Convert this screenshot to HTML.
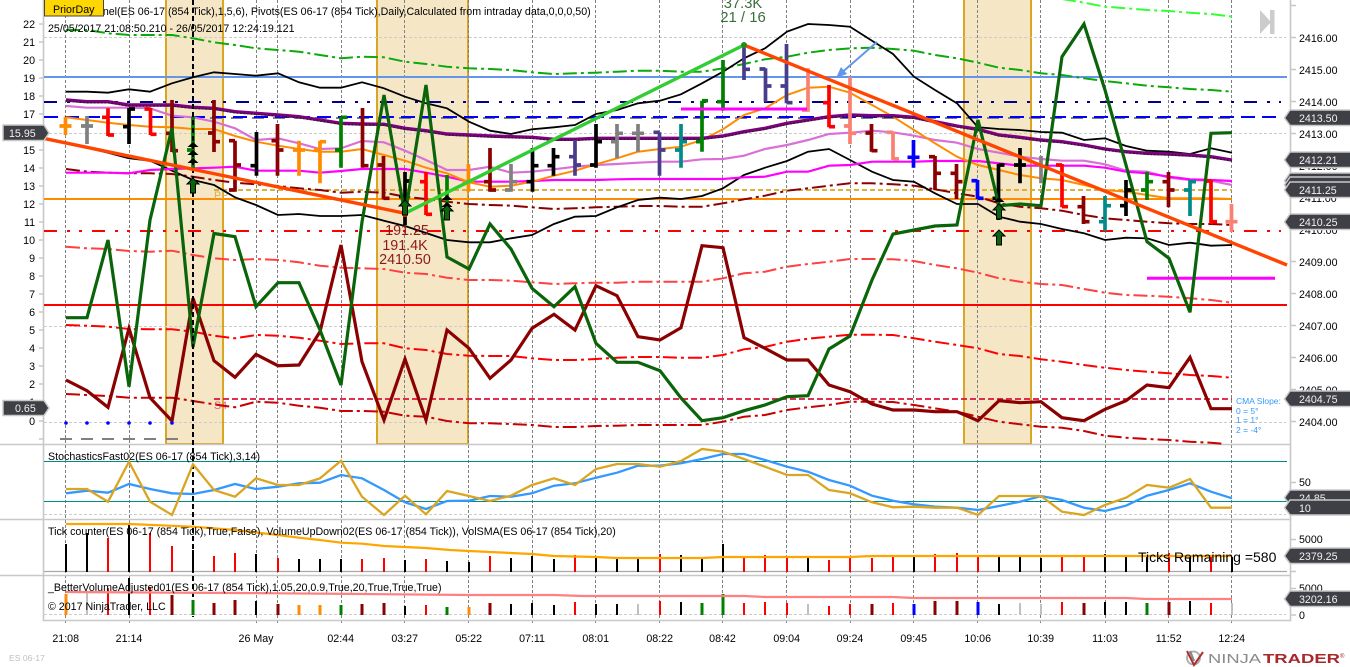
<!DOCTYPE html>
<html><head><meta charset="utf-8"><style>
html,body{margin:0;padding:0;background:#fff;width:1350px;height:667px;overflow:hidden}
svg{display:block}
text{font-family:"Liberation Sans",sans-serif;font-size:10.67px;fill:#000}
.l text{text-anchor:end}
.r text{text-anchor:start}
.t text{text-anchor:middle}
.f{fill:#3f3f46;stroke:#c8c8c8;stroke-width:1.5}
.w{fill:#f2f2f2}
polyline,path.n{fill:none}
</style></head><body>
<svg width="1350" height="667" viewBox="0 0 1350 667" xmlns="http://www.w3.org/2000/svg">
<defs><path id="ar" d="M0 0L6 6H2.5V15H-2.5V6H-6Z" fill="#0a640a" stroke="#000" stroke-width="1"/>
<path id="tr" d="M0 0L5.5 5H-5.5Z" fill="#000"/></defs>

<!-- session zones -->
<g fill="#f5e7c6" stroke="#daa520" stroke-width="2">
<rect x="166" y="-3" width="57" height="447"/>
<rect x="377" y="-3" width="91" height="447"/>
<rect x="964" y="-3" width="67" height="447"/>
</g>

<!-- horizontal grid -->
<g stroke="#ccc" stroke-width="1" stroke-dasharray="3,2">
<path d="M44 37.5H1286M44 133.5H1286M44 326.5H1286M44 422.5H1286M44 514.5H1286M44 614.5H1286"/>
</g>
<!-- vertical grid -->
<path d="M65.5 0V623M129.5 0V623M256.5 0V623M277.5 0V623M341.5 0V623M404.5 0V623M468.5 0V623M532.5 0V623M595.5 0V623M659.5 0V623M722.5 0V623M786.5 0V623M850.5 0V623M913.5 0V623M977.5 0V623M1040.5 0V623M1105.5 0V623M1168.5 0V623M1231.5 0V623" stroke="#808080" stroke-width="1" stroke-dasharray="3,2"/>

<!-- panel frames -->
<g stroke="#c8c8c8" stroke-width="1.6" fill="none">
<path d="M43.5 0V620.5H1290.5V0"/>
<path d="M0 444.5H1290M0 519.5H1290M0 575.5H1290"/>
<path d="M39 24H43M39 42H43M39 60H43M39 78H43M39 96H43M39 114H43M39 132H43M39 150H43M39 168H43M39 186H43M39 204H43M39 222H43M39 240H43M39 258H43M39 276H43M39 294H43M39 312H43M39 330H43M39 348H43M39 366H43M39 384H43M39 402H43M39 421H43M39 439H43"/>
<path d="M1291 5.5H1296M1291 37.5H1296M1291 69.5H1296M1291 101.5H1296M1291 133.5H1296M1291 165.5H1296M1291 197.5H1296M1291 229.5H1296M1291 261.5H1296M1291 293.5H1296M1291 325.5H1296M1291 357.5H1296M1291 389.5H1296M1291 421.5H1296M1291 482.5H1296M1291 539.5H1296M1291 571.5H1296M1291 588.5H1296M1291 615H1296"/>
</g>

<!-- horizontal levels -->
<g fill="none">
<path d="M44 77H1287" stroke="#6495ed" stroke-width="2"/>
<path d="M44 102H1281" stroke="#00008b" stroke-width="2" stroke-dasharray="13,10,3,9,3,10"/>
<path d="M210 118H1232" stroke="#808080" stroke-width="2" stroke-dasharray="12,9"/>
<path d="M44 117H1281" stroke="#0000ff" stroke-width="2" stroke-dasharray="14,7"/>
<path d="M214 190H1232" stroke="#daa520" stroke-width="1.8" stroke-dasharray="5,3"/>
<path d="M44 199H1232" stroke="#ff8c00" stroke-width="2"/>
<path d="M44 231H1281" stroke="#ff0000" stroke-width="2" stroke-dasharray="13,10,3,9,3,10"/>
<path d="M44 305H1287" stroke="#ff0000" stroke-width="2"/>
<path d="M214 399H1232" stroke="#dc143c" stroke-width="1.8" stroke-dasharray="6,3"/>
</g>
<text x="214" y="199" style="fill:#dab048;font-size:10.67px">PP</text>
<text x="214" y="409" style="fill:#e06080;font-size:10.67px">S4</text>

<!-- envelope dash-dot lines -->
<g stroke-dasharray="14,4,3,4" stroke-width="2">
<polyline stroke="#33ff33" points="1062,-1 1084,2.7 1105,6.7 1126,8.3 1147,10 1169,11 1190,12.7 1211,14 1232,16.7"/>
<polyline stroke="#0aaa0a" points="66,30 87,30 108,33.3 129,35 150,35 172,35 193,38.3 214,42.3 235,45 256,48.3 278,50 299,51.7 320,55 341,58.3 362,56.7 384,57.3 405,61.7 426,64 447,66.7 469,68.3 490,69 511,70 532,72.3 554,74 575,73.3 596,72.7 617,71.7 638,70.7 660,70.7 681,71.7 702,71.7 723,68.3 744,64 765,59.3 787,56.7 808,52.7 829,50 850,48.3 872,47.7 893,49 914,50.7 935,55 957,58.3 978,62.7 999,67.7 1020,70 1041,73.3 1062,75 1084,78.3 1105,81 1126,83.3 1147,85.7 1169,87.3 1190,89 1211,90 1232,91.7"/>
<polyline stroke="#8b0000" points="66,169 87,171.7 108,172.7 129,173.3 150,173.3 172,174 193,176.7 214,180 235,182.7 256,184.3 278,186 299,188.3 320,190 341,192.7 362,191.7 384,192.7 405,196.7 426,199 447,201.7 469,204 490,205 511,205.7 532,207.3 554,209 575,208.3 596,207.3 617,206.7 638,206 660,206 681,206.7 702,206.7 723,203.3 744,199.3 765,195.7 787,190.7 808,188.3 829,185.7 850,183.3 872,183.3 893,184.3 914,185.7 935,189.3 957,193.3 978,196.7 999,203.3 1020,206.7 1041,208.3 1062,210.7 1084,215 1105,218.3 1126,220 1147,221.7 1169,223.3 1190,224 1211,224 1232,225"/>
<polyline stroke="#ff4040" points="66,246.7 87,248.3 108,249 129,251 150,251.7 172,250.7 193,255 214,258.3 235,260 256,259 278,260 299,262.3 320,265.7 341,267.7 362,268.3 384,269 405,272.7 426,274 447,277.7 469,280 490,280 511,280.7 532,282.3 554,284 575,283.3 596,282.7 617,282.7 638,281.7 660,281.7 681,281.7 702,281.7 723,278.3 744,273.3 765,271.7 787,266.7 808,264 829,261.7 850,259 872,259 893,259.3 914,261 935,265 957,268.3 978,272.7 999,278.3 1020,281.7 1041,284 1062,285 1084,289 1105,292.7 1126,295 1147,295.7 1169,296.7 1190,298.3 1211,300 1232,302.7"/>
<polyline stroke="#ff0000" points="66,325 87,325.7 108,326.7 129,329 150,329.3 172,329.3 193,331.7 214,335.7 235,338.3 256,335 278,335.7 299,337.7 320,340.7 341,344 362,343.3 384,343.3 405,348.3 426,350 447,354 469,355.7 490,356 511,356 532,358.3 554,360 575,360 596,359 617,357.7 638,357 660,357 681,357.7 702,357.7 723,355 744,349.3 765,347 787,341.7 808,338.7 829,336.7 850,334.7 872,334.7 893,335 914,338.3 935,341.7 957,345 978,348.3 999,354 1020,356 1041,359.3 1062,361.7 1084,365 1105,367.7 1126,370 1147,371.7 1169,373.3 1190,375 1211,376 1232,377.7"/>
<polyline stroke="#c80000" points="66,394 87,395 108,396 129,397.7 150,397.7 172,397.7 193,401 214,404.3 235,407.3 256,401.7 278,402.7 299,405.7 320,407.7 341,411 362,411 384,411.7 405,415.7 426,416.7 447,421 469,423.3 490,423.3 511,424 532,425 554,427 575,427 596,426 617,425.7 638,425 660,425 681,425 702,425 723,421.7 744,416.7 765,415 787,410 808,407.3 829,405 850,401.7 872,401.7 893,402 914,405 935,408.3 957,411.7 978,416.7 999,421.7 1020,424.3 1041,426.7 1062,427.7 1084,431 1105,435.7 1126,437.7 1147,439 1169,440 1190,441.7 1211,442.7 1225,444"/>
</g>

<!-- moving averages -->
<polyline stroke="#000" stroke-width="1.8" points="66,91.7 87,91.7 108,92.7 129,89.3 150,91.7 172,83.3 193,77.3 214,72.3 235,74 256,75.7 278,73.3 299,82.3 320,87.7 341,87.7 362,82.3 384,88.3 405,96.7 426,103.3 447,108.3 469,121.7 490,130.7 511,134 532,129.3 554,127.3 575,125 596,114 617,110 638,103.3 660,100.7 681,94.3 702,83.3 723,71.7 744,58.3 765,48.3 787,31.7 808,24 829,25 850,26.7 872,40.7 893,54 914,76.7 935,90 957,103.3 978,127.3 999,129 1020,130 1041,132 1062,132.7 1084,140 1105,138.3 1126,146 1147,150.7 1169,151.7 1190,154 1211,148.3 1232,152.7"/>
<polyline stroke="#000" stroke-width="1.8" points="66,143.3 87,147.7 108,152.7 129,158.3 150,160.7 172,170.7 193,180 214,185 235,197.3 256,205 278,215 299,214 320,216 341,216 362,215 384,220.7 405,226 426,233 447,240 469,242.3 490,242.3 511,238.3 532,235 554,224 575,216.7 596,216 617,207.3 638,200 660,197.7 681,199 702,196 723,188.3 744,175 765,167.7 787,161 808,151.7 829,149 850,160 872,171.7 893,180 914,181.7 935,193.3 957,204 978,204 999,216.7 1020,221.7 1041,224 1062,229 1084,233.3 1105,240 1126,237.7 1147,238.3 1169,245 1190,242.7 1211,245.7 1232,245"/>
<polyline stroke="#da70d6" stroke-width="2.2" points="66,106 87,107.7 108,107.7 129,107.7 150,108.3 172,115.7 193,117.3 214,121.7 235,128.3 256,140 278,138.3 299,143.3 320,149 341,148.3 362,141 384,142.3 405,150.7 426,160 447,170 469,170 490,166.7 511,172.7 532,171.7 554,169.3 575,166.7 596,165 617,164 638,162.7 660,161.7 681,161.7 702,159.3 723,159 744,155.7 765,149 787,145 808,140 829,134 850,132.7 872,130.7 893,132.3 914,135.7 935,140 957,142.7 978,149 999,152.7 1020,156.7 1041,159 1062,160.7 1084,160.7 1105,164.3 1126,170.7 1147,171.7 1169,177.7 1190,180 1211,180.7 1232,185"/>
<polyline stroke="#ff00ff" stroke-width="2.2" points="66,172.7 87,172.7 108,172.7 129,173.3 150,170 172,169 193,168.3 214,167.7 235,166.7 256,170.7 278,170.7 299,170.7 320,172.7 341,171 362,169 384,169 405,169 426,172.7 447,176.7 469,181.7 490,181.7 511,181.7 532,181 554,180 575,180 596,180 617,179.3 638,179 660,179 681,179 702,179 723,179 744,177.3 765,176.7 787,171.7 808,171.7 829,165.7 850,165 872,161.7 893,161.7 914,161.7 935,161 957,161 978,161 999,163.3 1020,165.7 1041,165.7 1062,165.7 1084,165.7 1105,167.7 1126,171.7 1147,173.3 1169,176.7 1190,179.3 1211,180 1232,181"/>
<polyline stroke="#ff8c00" stroke-width="2" points="66,117.3 87,120 108,122.7 129,125 150,126.7 172,127.3 193,129 214,129 235,136 256,141.7 278,145.7 299,149 320,151.7 341,151.7 362,149 384,155 405,160.7 426,167.7 447,173.3 469,182.3 490,186.7 511,185.7 532,181.7 554,175.7 575,170.7 596,164.3 617,158.3 638,151.7 660,149 681,146.7 702,140 723,129.3 744,115 765,108.3 787,95 808,87.7 829,86.7 850,92.7 872,105 893,116.7 914,130 935,143.3 957,156.7 978,165 999,170 1020,175 1041,178.3 1062,180 1084,185 1105,190 1126,191.7 1147,195 1169,198.3 1190,198.3 1211,198.3 1232,199"/>
<polyline stroke="#800080" stroke-width="3.4" points="66,100 87,101.7 108,101.7 129,105 150,105 172,105 193,107.3 214,108.3 235,111.7 256,113.3 278,115 299,116.7 320,120 341,123.3 362,124 384,124.3 405,128.3 426,130.7 447,134 469,135 490,136 511,136.7 532,137.3 554,139.3 575,139.3 596,138.3 617,138.3 638,138.3 660,138.3 681,138.3 702,138.3 723,136 744,131.7 765,128.3 787,123.3 808,120 829,116.7 850,115 872,115.7 893,115.7 914,117.3 935,121.7 957,126 978,129.3 999,135 1020,137.3 1041,140 1062,141.7 1084,145 1105,149 1126,151.7 1147,153.3 1169,154 1190,155 1211,156.7 1232,160"/>
<polyline stroke="#222" stroke-width="1.5" stroke-dasharray="1.5,2" points="66,101 87,102.7 108,102.7 129,106 150,106 172,106 193,108.3 214,109.3 235,112.7 256,114.3 278,116 299,117.7 320,121 341,124.3 362,125 384,125.3 405,129.3 426,131.7 447,135 469,136 490,137 511,137.7 532,138.3 554,140.3 575,140.3 596,139.3 617,139.3 638,139.3 660,139.3 681,139.3 702,139.3 723,137 744,132.7 765,129.3 787,124.3 808,121 829,117.7 850,116 872,116.7 893,116.7 914,118.3 935,122.7 957,127 978,130.3 999,136 1020,138.3 1041,141 1062,142.7 1084,146 1105,150 1126,152.7 1147,154.3 1169,155 1190,156 1211,157.7 1232,161"/>

<!-- OHLC bars -->
<g class="bars" fill="none" stroke-width="3.7">
<path class="n" stroke="#ff8c00" d="M65.5 116.7V135M59.5 126H71.5M299 140.7V175.7M293 150H305M320 140.7V183.3M314 150H320M320 141.7H326M468.5 164V191.7M462.5 181.7H474.5"/>
<path class="n" stroke="#808080" d="M87 116V144M81 126H93M511 164V191.7M505 190H511M511 181.7H517M617 124V158.3M611 141.7H617M617 133.3H623M638 124V151.7M632 133.3H644M1041 156V183.3"/>
<path class="n" stroke="#ff0000" d="M108 108.3V136M102 117.3H108M108 135H114M150.5 108V135M144.5 109H150.5M150.5 134.3H156.5M426 172V215M420 181.7H426M426 214.3H432M829 85V127.3M823 102.7H829M829 126.7H835M1062 164V207.3M1056 165H1062M1062 206.7H1068M1211 180V224M1205 181H1211M1211 221.7H1217"/>
<path class="n" stroke="#8b0000" d="M172 100V152M166 133.3H172M172 150.7H178M214 100V152M208 133H214M214 141.7H220M235 140.7V191.7M229 140.7H235M235 165H241M235 190H229M277.5 124V175.7M271.5 140.7H277.5M277.5 150H283.5M362.5 108V167.7M362.5 165.7H368.5M383.5 156V199.3M377.5 165H383.5M383.5 198.3H389.5M490 148V191.7M484 181.7H490M490 190H496M871.5 124V151.7M865.5 133H871.5M871.5 150.7H877.5M935 156V190M929 156.7H935M935 173.3H941M956.5 164V199M950.5 173.3H956.5M956.5 181.7H962.5M1083.5 196V224M1077.5 206.7H1083.5M1083.5 221.7H1089.5M1168.5 172V207.3M1162.5 181.7H1168.5M1168.5 190H1174.5"/>
<path class="n" stroke="#000" d="M129 108V144M123 126.7H129M129 109H135M256.5 132V175.7M250.5 165.7H256.5M405 172V225M399 196.7H405M405 181H411M532.5 148V191.7M526.5 181.7H532.5M532.5 165.7H538.5M553.5 148V175.7M547.5 165.7H553.5M553.5 156.7H559.5M596 124V167.7M590 165H596M596 141.7H602M998.5 164V220M992.5 198.3H998.5M998.5 165H1004.5M1020 148V183.3M1014 165H1026M1126 180V216M1120 205.7H1126M1126 190H1132"/>
<path class="n" stroke="#008000" d="M193 117V168M187 150H193M341 116.7V167.7M335 150H341M341 117.3H347M447 175V220M702 100.7V151.7M696 141.7H702M702 100.7H708M723 60V110.7M717 101.7H723M1147 171.7V200M1141 190H1147M1147 181.7H1153"/>
<path class="n" stroke="#483d8b" d="M575 140V175.7M569 156.7H575M575 165H581M659.5 132.3V175.7M653.5 132.3H659.5M659.5 150H665.5M744 45V80M744 69.3H750M765.5 68.3V101.7M759.5 69H765.5M765.5 86H771.5M786.5 44V103.3M780.5 86H786.5M786.5 102.7H792.5"/>
<path class="n" stroke="#008b8b" d="M681 124V167.7M675 150H681M681 141.7H687M1105 196V231M1099 221.7H1105M1105 205.7H1111M1190 180V216M1184 190H1190M1190 181.7H1196"/>
<path class="n" stroke="#fa8072" d="M808 68.3V111.7M808 110H802M850 77V144M844 126H850M850 133.3H856M893 132V160M887 132.3H893M893 159H899M1231.5 204V232M1225.5 221.7H1237.5"/>
<path class="n" stroke="#0000ff" d="M913.5 140V167.7M907.5 157.3H919.5M977.5 180V199M971.5 180.7H977.5M977.5 198.3H983.5"/>
</g>

<!-- magenta segments -->
<path d="M681 109H807M1147 278.3H1275" stroke="#ff00ff" stroke-width="3" fill="none"/>

<!-- indicator thick lines -->
<polyline stroke="#8b0000" stroke-width="3.2" stroke-linejoin="miter" points="66,380 87,390.7 108,407.3 129,328.3 150,397.7 172,421 193,298.3 214,360.7 235,377.3 256,354.3 278,365.7 299,365 320,331.7 341,245 362,361.7 384,420 405,359 426,420 447,330 469,348.3 490,378.3 511,360 532,328.3 554,314.3 575,330 596,285.7 617,295.7 638,336.7 660,340 681,327.7 702,245.7 723,247.7 744,337.7 765,348.3 787,360 808,360 829,385 850,391.7 872,404 893,410 914,410 935,411.7 957,411.7 978,420.7 999,400.7 1020,402.7 1041,401.7 1062,417.7 1084,420.7 1105,409.3 1126,400.7 1147,385 1169,387.7 1190,357.3 1211,408.7 1232,408.7"/>
<polyline stroke="#0a640a" stroke-width="3.2" stroke-linejoin="miter" points="66,317.7 87,317.7 108,240 129,386.7 150,220 172,128 193,347 214,233.5 235,236.7 256,306.7 278,282.7 299,282.7 320,330 341,385 362,222 384,95 405,215 426,85 447,257 469,269 490,224 511,249 532,288.3 554,306.7 575,286.7 596,343.3 617,362.3 638,362.3 660,370.7 681,398 702,420.7 723,417.7 744,410.7 765,405 787,396.7 808,395.7 829,349 850,336 872,280 893,234 914,230 935,226 957,225 978,120 999,205.7 1020,204 1041,205.7 1062,56.7 1084,24 1105,90 1126,165 1147,241.7 1169,258.3 1190,312.3 1211,133.3 1232,132.7"/>

<!-- low-level dots and dashes -->
<g fill="#0000ff"><circle cx="66" cy="423" r="1.8"/><circle cx="87" cy="423" r="1.8"/><circle cx="108" cy="423" r="1.8"/><circle cx="129" cy="423" r="1.8"/><circle cx="150" cy="423" r="1.8"/><circle cx="172" cy="423" r="1.8"/></g>
<path d="M60 439H72M81 439H93M102 439H114M123 439H135M144 439H156M166 439H178" stroke="#808080" stroke-width="2" fill="none"/>

<!-- black cursor line -->
<path d="M193 0V617" stroke="#000" stroke-width="2" stroke-dasharray="5,3" fill="none"/>

<!-- trend lines -->
<g fill="none" stroke-width="3.4">
<path d="M43.5 138.3L405 213.3" stroke="#ff4500"/>
<path d="M744 45L1287 265" stroke="#ff4500"/>
<path d="M405 213.3L744 45" stroke="#32cd32"/>
</g>
<circle cx="405" cy="214" r="3" fill="#ff2000"/>
<circle cx="744" cy="45" r="3" fill="#228b22"/>
<path d="M877 42L839 75" stroke="#6495ed" stroke-width="2" fill="none"/>
<path d="M836 78L841 67L847 74Z" fill="#6495ed"/>

<!-- arrows -->
<use href="#tr" x="193" y="142"/><use href="#tr" x="193" y="150"/><use href="#tr" x="193" y="158"/>
<use href="#ar" x="193" y="178"/>
<use href="#ar" x="405" y="200"/>
<use href="#tr" x="447" y="195"/><use href="#tr" x="447" y="202"/><use href="#ar" x="447" y="205"/>
<use href="#tr" x="999" y="197"/><use href="#ar" x="999" y="204"/>
<use href="#ar" x="999" y="230"/>

<!-- chart annotations -->
<g class="t">
<text x="743" y="8" style="font-size:14.7px;fill:#3a6e3a">37.3K</text>
<text x="743" y="22" style="font-size:14.9px;fill:#3a6e3a">21 / 16</text>
<text x="407" y="235" style="font-size:14.3px;fill:#8b1a1a">191.25</text>
<text x="405" y="250" style="font-size:14.3px;fill:#8b1a1a">191.4K</text>
<text x="405" y="264" style="font-size:14.3px;fill:#8b1a1a">2410.50</text>
</g>

<!-- stochastics -->
<path d="M44 461.5H1287M44 501.5H1287" stroke="#008b8b" stroke-width="1" fill="none"/>
<polyline stroke="#3399ff" stroke-width="2.3" points="66,493.3 87,490.7 108,492.7 129,484 150,489 172,493.3 193,494 214,490 235,484 256,489 278,486.7 299,483.3 320,482.7 341,475 362,478.3 384,490 405,502.3 426,509 447,501 469,500.7 490,496 511,496.7 532,493.3 554,485.7 575,483.3 596,477.7 617,472.7 638,465.7 660,465.7 681,463.3 702,459 723,454 744,454 765,460 787,466.7 808,471.7 829,480 850,485.7 872,495.7 893,500.7 914,504.3 935,506.7 957,507.7 978,510 999,506 1020,501.7 1041,496 1062,500 1084,507.7 1105,511 1126,505.7 1147,495.7 1169,490 1190,483.3 1211,491.7 1232,498.3"/>
<polyline stroke="#daa520" stroke-width="2.3" points="66,489 87,489 108,501.7 129,461.7 150,501.7 172,515 193,464.3 214,490 235,496.7 256,478.3 278,485 299,485 320,478.3 341,460.7 362,496.7 384,515 405,495.7 426,514.3 447,491 469,496 490,501 511,495.7 532,485 554,478.3 575,485 596,469 617,464 638,464 660,466.7 681,461 702,449 723,451.7 744,459 765,466.7 787,475 808,475 829,490 850,493.3 872,502.3 893,507.3 914,506.7 935,507.7 957,507.7 978,515 999,496 1020,496 1041,496 1062,511.7 1084,515 1105,505 1126,497.7 1147,485 1169,487.7 1190,479 1211,507.7 1232,507.7"/>

<!-- tick volume -->
<path d="M44 571.5H1287" stroke="#a9a9a9" stroke-width="1.3" fill="none"/>
<g fill="none" stroke-width="2">
<path stroke="#000" d="M66 544V572M87 533V572M129 525V572M193 550V572M256 554V572M299 559V572M320 559V572M341 559V572M405 560V572M447 561V572M469 562V572M511 558V572M532 556V572M554 559V572M596 558V572M617 559V572M638 559V572M681 555V572M702 559V572M723 544V572M808 558V572M914 557V572M999 557V572M1020 557V572M1041 558V572M1105 554V572M1126 557V572M1147 557V572M1190 557V572M1232 557V572"/>
<path stroke="#f00" d="M108 538V572M150 533V572M172 546V572M214 556V572M235 553V572M278 558V572M362 559V572M384 558V572M426 559V572M490 556V572M575 555V572M660 554V572M744 558V572M765 555V572M787 558V572M829 560V572M850 558V572M872 558V572M893 557V572M935 554V572M957 553V572M978 557V572M1062 557V572M1084 557V572M1169 553V572M1211 557V572"/>
</g>
<polyline stroke="#ffa500" stroke-width="2.2" points="66,524 129,524 193,526.7 235,530 278,535 299,537.7 320,540 341,542.7 362,543.7 384,546 405,547 426,548 450,550 469,551 532,554 554,556 596,557 617,558 702,558 723,557 850,557 872,556 1232,556"/>

<!-- adjusted volume -->
<g fill="none">
<path stroke="#ff8c00" stroke-width="3" d="M66 594V615M299 605V615M320 605V615M469 607V615"/>
<path stroke="#c0c0c0" stroke-width="2" d="M87 592V615M638 604V615M808 604V615M1020 603V615M1041 604V615M1232 603V615"/>
<path stroke="#f00" stroke-width="2" d="M108 588V615M150 587V615M426 605V615M575 602V615M660 601V615M744 603V615M765 602V615M787 603V615M829 606V615M850 604V615M893 603V615M1062 602V615M1211 603V615"/>
<path stroke="#000" stroke-width="2" d="M129 578V615M256 601V615M405 606V615M511 604V615M532 603V615M554 605V615M596 604V615M617 604V615M681 602V615M999 604V615M1105 602V615M1126 602V615M1190 601V615"/>
<path stroke="#8b0000" stroke-width="3" d="M172 595V615M214 603V615M235 600V615M278 604V615M362 604V615M384 603V615M490 603V615M872 604V615M935 601V615M957 601V615M1084 603V615M1169 602V615"/>
<path stroke="#008000" stroke-width="3" d="M193 600V615M341 605V615M447 607V615M702 603V615M723 594V615M1147 603V615"/>
<path stroke="#0000ff" stroke-width="3" d="M914 604V615M978 602V615"/>
</g>
<polyline stroke="#ff8080" stroke-width="2.2" points="66,592 278,593.3 362,594 469,595 554,595 583,596 744,596 765,597 893,597 914,598 1126,598 1147,599 1232,599"/>

<!-- legend text -->
<text x="590.7" y="15" text-anchor="end" style="text-anchor:end">KeltnerChannel(ES 06-17 (854 Tick),1,5,6), Pivots(ES 06-17 (854 Tick),Daily,Calculated from intraday data,0,0,0,50)</text>
<text x="48" y="32">25/05/2017 21:08:50.210 - 26/05/2017 12:24:19.121</text>
<text x="48" y="460">StochasticsFast02(ES 06-17 (854 Tick),3,14)</text>
<text x="48" y="535">Tick counter(ES 06-17 (854 Tick),True,False), VolumeUpDown02(ES 06-17 (854 Tick)), VolSMA(ES 06-17 (854 Tick),20)</text>
<text x="48" y="591">_BetterVolumeAdjusted01(ES 06-17 (854 Tick),1.05,20,0.9,True,20,True,True,True)</text>
<text x="48" y="610">© 2017 NinjaTrader, LLC</text>
<text x="1138" y="562" style="font-size:14px">Ticks Remaining =580</text>

<rect x="44.5" y="-1" width="59" height="17" fill="#ffd700" stroke="#444" stroke-width="1"/>
<text x="53" y="13" style="font-size:10.67px">PriorDay</text>

<!-- next icon -->
<path d="M1260 10L1271 22L1260 34Z" fill="#ccc"/><rect x="1270" y="10" width="4.5" height="24" fill="#ccc"/>

<!-- cma slope -->
<g style="fill:#3399ff">
<text x="1236" y="404" style="font-size:8.5px;fill:#3399ff">CMA Slope:</text>
<text x="1236" y="414" style="font-size:8.5px;fill:#3399ff">0 = 5°</text>
<text x="1236" y="423" style="font-size:8.5px;fill:#3399ff">1 = 1°</text>
<text x="1236" y="433" style="font-size:8.5px;fill:#3399ff">2 = -4°</text>
</g>

<!-- left axis labels -->
<g class="l">
<text x="35" y="28">22</text><text x="35" y="46">21</text><text x="35" y="64">20</text><text x="35" y="82">19</text><text x="35" y="100">18</text><text x="35" y="118">17</text><text x="35" y="136">16</text><text x="35" y="154">15</text><text x="35" y="172">14</text><text x="35" y="190">13</text><text x="35" y="208">12</text><text x="35" y="226">11</text><text x="35" y="244">10</text><text x="35" y="262">9</text><text x="35" y="280">8</text><text x="35" y="298">7</text><text x="35" y="316">6</text><text x="35" y="334">5</text><text x="35" y="352">4</text><text x="35" y="370">3</text><text x="35" y="388">2</text><text x="35" y="406">1</text><text x="35" y="425">0</text>
</g>

<!-- right axis labels -->
<g class="r">
<text x="1299" y="42">2416.00</text><text x="1299" y="74">2415.00</text><text x="1299" y="106">2414.00</text><text x="1299" y="138">2413.00</text><text x="1299" y="170">2412.00</text><text x="1299" y="202">2411.00</text><text x="1299" y="234">2410.00</text><text x="1299" y="266">2409.00</text><text x="1299" y="298">2408.00</text><text x="1299" y="330">2407.00</text><text x="1299" y="362">2406.00</text><text x="1299" y="394">2405.00</text><text x="1299" y="426">2404.00</text>
<text x="1299" y="486">50</text><text x="1299" y="543">5000</text><text x="1299" y="592">5000</text><text x="1299" y="619">0</text>
</g>

<!-- price flags -->
<path class="f" d="M3 125H44L49 133L44 140.5H3Z"/><text x="9" y="137" class="w" style="fill:#f2f2f2">15.95</text>
<path class="f" d="M3 400.5H44L49 408L44 415.5H3Z"/><text x="15" y="412" style="fill:#f2f2f2">0.65</text>
<path class="f" d="M1351 110H1290L1284.5 118L1290 125.5H1351Z"/><text x="1299" y="122" style="fill:#f2f2f2">2413.50</text>
<path class="f" d="M1351 152H1290L1284.5 160L1290 167.5H1351Z"/>
<text x="1299" y="164" style="fill:#f2f2f2">2412.21</text>
<path class="f" d="M1351 173H1290L1284.5 181L1290 188.5H1351Z"/>
<path class="f" d="M1351 177H1290L1284.5 185L1290 192.5H1351Z"/>
<path class="f" d="M1351 182H1290L1284.5 190L1290 197.5H1351Z"/><text x="1299" y="194" style="fill:#f2f2f2">2411.25</text>
<path class="f" d="M1351 214H1290L1284.5 222L1290 229.5H1351Z"/><text x="1299" y="226" style="fill:#f2f2f2">2410.25</text>
<path class="f" d="M1351 391H1290L1284.5 399L1290 406.5H1351Z"/><text x="1299" y="403" style="fill:#f2f2f2">2404.75</text>
<path class="f" d="M1351 490H1290L1284.5 497.7L1290 505H1351Z"/><text x="1299" y="502" style="fill:#f2f2f2">24.85</text>
<path class="f" d="M1351 500H1290L1284.5 507.7L1290 515H1351Z"/><text x="1299" y="512" style="fill:#f2f2f2">10</text>
<path class="f" d="M1351 548H1290L1284.5 556L1290 563.5H1351Z"/><text x="1299" y="560" style="fill:#f2f2f2">2379.25</text>
<path class="f" d="M1351 591H1290L1284.5 599L1290 606.5H1351Z"/><text x="1299" y="603" style="fill:#f2f2f2">3202.16</text>

<!-- time axis -->
<g class="t">
<text x="65.7" y="642">21:08</text><text x="129" y="642">21:14</text><text x="256" y="642">26 May</text><text x="340.7" y="642">02:44</text><text x="404.7" y="642">03:27</text><text x="468.7" y="642">05:22</text><text x="532" y="642">07:11</text><text x="595.7" y="642">08:01</text><text x="659.7" y="642">08:22</text><text x="722.5" y="642">08:42</text><text x="786.7" y="642">09:04</text><text x="850" y="642">09:24</text><text x="913.7" y="642">09:45</text><text x="977.7" y="642">10:06</text><text x="1040.7" y="642">10:39</text><text x="1105" y="642">11:03</text><text x="1168.7" y="642">11:52</text><text x="1231.7" y="642">12:24</text>
</g>
<text x="9" y="661" style="font-size:8.6px;fill:#c0c0c0">ES 06-17</text>

<!-- NinjaTrader logo -->
<circle cx="1193.5" cy="658" r="6.5" fill="none" stroke="#aaa" stroke-width="1.8"/>
<path d="M1187 651L1194 665L1203 652" fill="none" stroke="#b03030" stroke-width="2"/>
<path d="M1190 651L1194 661" fill="none" stroke="#888" stroke-width="2.2"/>
<text x="1208" y="663" textLength="53" lengthAdjust="spacingAndGlyphs" style="font-size:12.5px;fill:#8a8a8a">NINJA</text>
<text x="1263" y="663" textLength="77" lengthAdjust="spacingAndGlyphs" style="font-size:12.5px;fill:#a8282c;font-weight:bold">TRADER</text>
<text x="1340" y="658" style="font-size:6px;fill:#a8282c">®</text>
</svg>
</body></html>
